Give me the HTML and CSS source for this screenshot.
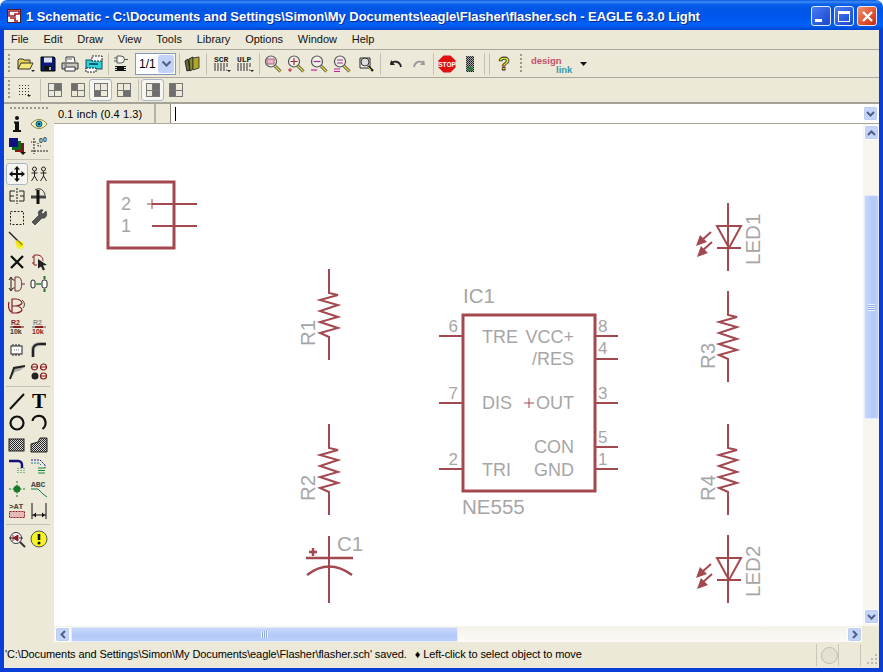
FILE: index.html
```html
<!DOCTYPE html>
<html lang="en">
<head>
    <meta charset="UTF-8">
    <title>1 Schematic - EAGLE 6.3.0 Light</title>
    <link rel="stylesheet" href="styles.css">
</head>
<body>
<div class="window">
    <header class="titlebar">
        <svg class="app_icon" width="14" height="14" viewBox="0 0 14 14"><rect x=".5" y=".5" width="13" height="13" fill="#fff" stroke="#5a1a20"/><path d="M2 2h10v3H8v2H2zM3 9h5v3h3" fill="none" stroke="#a01c28" stroke-width="1.6"/></svg>
        <div class="title_text">1 Schematic - C:\Documents and Settings\Simon\My Documents\eagle\Flasher\flasher.sch - EAGLE 6.3.0 Light</div>
        <div class="cap_btn"><span class="cap_min"></span></div>
        <div class="cap_btn"><span class="cap_max"></span></div>
        <div class="cap_btn cap_close"><svg width="13" height="13" viewBox="0 0 13 13"><path d="M2 2l9 9M11 2l-9 9" stroke="#fff" stroke-width="2.4"/></svg></div>
    </header>

    <div class="frame">
        <nav class="menubar">
            <span>File</span><span>Edit</span><span>Draw</span><span>View</span><span>Tools</span><span>Library</span><span>Options</span><span>Window</span><span>Help</span>
        </nav>

        <div class="toolbar tb_main">
            <div class="grip"></div>
            <div class="tool"><svg width="18" height="18" viewBox="0 0 18 18"><path d="M1 14V5l1-1h4l1 1h6v3" fill="#e8d050" stroke="#333"/><path d="M1 14l3-6h12l-3 6z" fill="#f4e878" stroke="#333"/><path d="M14 15h4l-2 2z" fill="#222"/></svg></div>
            <div class="tool"><svg width="18" height="18" viewBox="0 0 18 18"><path d="M2 2h13l1 1v13H2z" fill="#0a1a78" stroke="#000"/><rect x="5" y="2.5" width="8" height="5" fill="#dfe4f4"/><rect x="5" y="11" width="8" height="5" fill="#111"/><rect x="10" y="12" width="2" height="3" fill="#aaa"/></svg></div>
            <div class="tool"><svg width="18" height="18" viewBox="0 0 18 18"><path d="M5 7V2h8l1 5" fill="#fff" stroke="#333"/><path d="M1 8h16v6H1z" fill="#c8c8c0" stroke="#333"/><path d="M4 12h10v4H4z" fill="#fff" stroke="#333"/><path d="M6 4h5M3 10h3" stroke="#666"/></svg></div>
            <div class="tool tool_gap"><svg width="18" height="18" viewBox="0 0 18 18"><rect x="1" y="5" width="16" height="9" fill="#2fd0d8" stroke="#16505a"/><rect x="7" y="1" width="10" height="5" fill="#fff" stroke="#222" stroke-dasharray="2 1"/><rect x="1" y="13" width="10" height="4" fill="#fff" stroke="#222" stroke-dasharray="2 1"/><path d="M4 9h9" stroke="#0a5d70" stroke-width="2"/></svg></div>
            <div class="sep"></div>
            <div class="tool"><svg width="18" height="18" viewBox="0 0 18 18"><path d="M5 1h4a3.500 3.500 0 0 1 0 7H5zM2 3h3M2 6h3M12 4.500h4" fill="#f4f4ec" stroke="#555"/><rect x="5" y="11" width="7" height="5" fill="#111"/><path d="M3 11.500h2M3 13.500h2M3 15.500h2M12 11.500h2M12 13.500h2M12 15.500h2" stroke="#111"/></svg></div>
            <div class="combo"><span>1/1</span><b class="combo_arrow"><svg width="11" height="8" viewBox="0 0 11 8"><path d="M1.500 1.500l4 4 4-4" fill="none" stroke="#4d6185" stroke-width="2"/></svg></b></div>
            <div class="sep"></div>
            <div class="tool"><svg width="18" height="18" viewBox="0 0 18 18"><path d="M2 6l3-2 2 11-3 1z" fill="#6b6b3a" stroke="#222"/><path d="M6 4l4-2v12l-3 2z" fill="#8c8a30" stroke="#222"/><path d="M10 3l6-1v11l-6 2z" fill="#b0a820" stroke="#444"/></svg></div>
            <div class="sep"></div>
            <div class="tool tool_wide tool_gap"><svg width="20" height="18" viewBox="0 0 20 18"><text class="ico_mono" x="2" y="7">SCR</text><path d="M2 9h14M2 11h14M2 13h12M2 15h13" stroke="#333" stroke-dasharray="2 1"/><path d="M15 15h4l-2 2z" fill="#222"/></svg></div>
            <div class="tool tool_wide"><svg width="20" height="18" viewBox="0 0 20 18"><text class="ico_mono" x="2" y="7">ULP</text><path d="M2 9h14M2 11h14M2 13h12M2 15h13" stroke="#333" stroke-dasharray="2 1"/><path d="M15 15h4l-2 2z" fill="#222"/></svg></div>
            <div class="sep"></div>
            <div class="tool tool_wide"><svg width="18" height="18" viewBox="0 0 18 18"><use href="#lens"/><rect x="3" y="4" width="7" height="5" fill="#e8b8c8" stroke="#b06080"/></svg></div>
            <div class="tool tool_wide"><svg width="18" height="18" viewBox="0 0 18 18"><use href="#lens"/><path d="M7 3v7M3.500 6.500h7" stroke="#a03040" stroke-width="1.200"/><path d="M1 15h4M3 13v4" stroke="#c02040"/></svg></div>
            <div class="tool tool_wide"><svg width="18" height="18" viewBox="0 0 18 18"><use href="#lens"/><path d="M3.500 6.500h7" stroke="#a03090" stroke-width="1.200"/><path d="M1 15h6" stroke="#c020a0" stroke-width="1.200"/></svg></div>
            <div class="tool tool_wide"><svg width="18" height="18" viewBox="0 0 18 18"><use href="#lens"/><path d="M4 5h6M4 8h6" stroke="#a03090" stroke-width="1.200"/><path d="M1 14h6M1 16.500h6" stroke="#c020a0"/></svg></div>
            <div class="tool tool_gap"><svg width="18" height="18" viewBox="0 0 18 18"><path d="M3 3l10 0v10H3z" fill="#fff" stroke="#222"/><circle cx="8" cy="7" r="4" fill="#ddd" stroke="#333"/><path d="M11 11l5 5" stroke="#222" stroke-width="2.400"/><path d="M11 12l3 3" stroke="#e8d030" stroke-width="1"/></svg></div>
            <div class="sep"></div>
            <div class="tool tool_wide tool_gap"><svg width="18" height="18" viewBox="0 0 18 18"><path d="M4 5l-1 5h5" fill="#222"/><path d="M4 9c2-4 9-3 10 3" fill="none" stroke="#222" stroke-width="1.800"/></svg></div>
            <div class="tool tool_wide"><svg width="18" height="18" viewBox="0 0 18 18"><path d="M14 5l1 5h-5" fill="#999"/><path d="M14 9c-2-4-9-3-10 3" fill="none" stroke="#999" stroke-width="1.800"/></svg></div>
            <div class="sep"></div>
            <div class="tool tool_wide"><svg width="18" height="18" viewBox="0 0 18 18"><path d="M5.500 .5h7l5 5v7l-5 5h-7l-5-5v-7z" fill="#e01010"/><text class="ico_stop" x="9" y="11.500">STOP</text></svg></div>
            <div class="tool tool_wide"><svg width="18" height="18" viewBox="0 0 18 18"><rect x="5" y="1" width="8" height="16" fill="url(#dots)"/><circle cx="9" cy="14" r="2.500" fill="#2c7a3a"/></svg></div>
            <div class="sep sep_double"></div>
            <div class="sep"></div>
            <div class="tool tool_gap"><svg width="18" height="20" viewBox="0 0 18 20"><text class="ico_help" x="9" y="16">?</text></svg></div>
            <div class="grip grip_link"></div>
            <div class="design_link"><span class="dl_a">design</span><span class="dl_b">link</span></div>
            <svg class="dl_arrow" width="7" height="4" viewBox="0 0 7 4"><path d="M0 0h7L3.500 4z" fill="#111"/></svg>
        </div>

        <div class="toolbar tb_view">
            <div class="grip"></div>
            <div class="tool tool_grid"><svg width="16" height="16" viewBox="0 0 16 16"><rect x="1" y="1" width="14" height="14" fill="url(#griddots)"/><path d="M11 13h4l-2 2z" fill="#222"/></svg></div>
            <div class="sep"></div>
            <div class="tool"><span class="quad"><i></i><i class="on"></i><i></i><i></i></span></div>
            <div class="tool"><span class="quad"><i class="on"></i><i></i><i></i><i></i></span></div>
            <div class="tool pressed"><span class="quad"><i></i><i></i><i class="on"></i><i></i></span></div>
            <div class="tool"><span class="quad"><i></i><i></i><i></i><i class="on"></i></span></div>
            <div class="sep"></div>
            <div class="tool pressed"><span class="quad"><i></i><i class="on"></i><i></i><i class="on"></i></span></div>
            <div class="tool"><span class="quad"><i class="on"></i><i></i><i class="on"></i><i></i></span></div>
        </div>

        <div class="workspace">
            <aside class="toolbox">
                <div class="grip_h"></div>
                <div class="box_grid">
                    <div class="cell"><svg width="18" height="18" viewBox="0 0 18 18"><circle cx="9" cy="3" r="2" fill="#111"/><path d="M6 6.500h5V15h2v2H5v-2h2V8.500H6z" fill="#111"/></svg></div>
                    <div class="cell"><svg width="18" height="18" viewBox="0 0 18 18"><path d="M1 9c4-6 12-6 16 0-4 6-12 6-16 0z" fill="#f6f2c0" stroke="#8a8a40"/><circle cx="9" cy="9" r="3" fill="#22a8c8" stroke="#185868"/><circle cx="9" cy="9" r="1" fill="#111"/></svg></div>
                    <div class="cell"><svg width="18" height="18" viewBox="0 0 18 18"><rect x="7" y="6" width="9" height="9" fill="#8a1414"/><rect x="4" y="4" width="9" height="9" fill="#0c6a1e"/><rect x="1" y="1" width="9" height="9" fill="#101080"/><path d="M12 15h6l-3 3z" fill="#111"/></svg></div>
                    <div class="cell"><svg width="18" height="18" viewBox="0 0 18 18"><path d="M4 1v16M1 14h17" stroke="#222" stroke-dasharray="2 1"/><path d="M8 9v-3M8 9h4M1 5h5" stroke="#222" stroke-dasharray="1 1"/><text class="ico_tiny" x="9" y="6">0</text><text class="ico_tiny" x="13" y="5">0</text></svg></div>
                    <div class="box_sep"></div>
                    <div class="cell pressed"><svg width="18" height="18" viewBox="0 0 18 18"><path d="M9 1l3 3.500h-2V8h3.500V6L17 9l-3.500 3v-2H10v3.500h2L9 17l-3-3.500h2V10H4.500v2L1 9l3.500-3v2H8V4.500H6z" fill="#111"/></svg></div>
                    <div class="cell"><svg width="18" height="18" viewBox="0 0 18 18"><g id="man" fill="none" stroke="#222"><circle cx="4.500" cy="4" r="2"/><path d="M4.500 6v5M1.500 8h6M4.500 11l-3 5M4.500 11l3 5"/></g><use href="#man" x="9"/></svg></div>
                    <div class="cell"><svg width="18" height="18" viewBox="0 0 18 18"><path d="M9 1v16" stroke="#111" stroke-dasharray="2 1"/><path d="M7 4H2v10h5M2 9h4M11 4h5v10h-5M16 9h-4" fill="none" stroke="#222"/></svg></div>
                    <div class="cell"><svg width="18" height="18" viewBox="0 0 18 18"><path d="M1 10h15" stroke="#444" stroke-width="3"/><path d="M8 3v14" stroke="#111" stroke-width="3"/><path d="M5 3c5-3 9 0 10 5" fill="none" stroke="#333"/></svg></div>
                    <div class="cell"><svg width="18" height="18" viewBox="0 0 18 18"><rect x="2.500" y="2.500" width="13" height="13" fill="none" stroke="#222" stroke-dasharray="2 1.500"/></svg></div>
                    <div class="cell"><svg width="18" height="18" viewBox="0 0 18 18"><path d="M16 2l-3 3-2-1 2-3c-3-1-6 2-4 5L2 13l3 3 7-7c3 1 6-2 4-7z" fill="#555" stroke="#222" stroke-width=".6"/></svg></div>
                    <div class="cell"><svg width="18" height="18" viewBox="0 0 18 18"><circle cx="12" cy="14" r="4" fill="#f4f040"/><path d="M1 1l13 13" stroke="#222" stroke-width="1.400"/><path d="M8 10l5 5" stroke="#f0e000" stroke-width="3"/></svg></div>
                    <div class="cell"></div>
                    <div class="cell"><svg width="18" height="18" viewBox="0 0 18 18"><path d="M3 3l12 12M15 3L3 15" stroke="#111" stroke-width="2.300"/></svg></div>
                    <div class="cell"><svg width="18" height="18" viewBox="0 0 18 18"><path d="M4 2h3c5 0 6 4 6 6M4 12h3M2 4h2M2 10h2M4 2v10" fill="none" stroke="#8a1c20"/><path d="M8 6l9 6-4 .5 2 4-2 1-2-4-3 2z" fill="#222"/></svg></div>
                    <div class="cell"><svg width="18" height="18" viewBox="0 0 18 18"><path d="M3 3v12M1 5l2-3 2 3M1 13l2 3 2-3" fill="none" stroke="#222"/><path d="M7 2h3c5 0 5 14 0 14H7zM7 5H5M7 13H5M14 9h3" fill="none" stroke="#7a3030"/></svg></div>
                    <div class="cell"><svg width="18" height="18" viewBox="0 0 18 18"><rect x="1" y="5" width="4" height="8" rx="2" fill="#fff" stroke="#222"/><rect x="12" y="5" width="5" height="8" rx="2" fill="#fff" stroke="#222"/><path d="M6 9h5" stroke="#1a7a2a" stroke-width="1.400"/><path d="M14.500 1v3M14.500 14v3" stroke="#1a7a2a" stroke-width="2"/></svg></div>
                    <div class="cell"><svg width="18" height="18" viewBox="0 0 18 18"><path d="M4 2h4c4 0 6 3 6 4s-3 3-6 3H4zM4 9h4c4 0 6 3 6 4s-3 3-6 3H4zM1 5c-1 4 0 8 2 10" fill="none" stroke="#8a1c20" stroke-width="1.200"/><path d="M14 3c3 2 3 6 1 8" fill="none" stroke="#444"/></svg></div>
                    <div class="cell"></div>
                    <div class="cell"><svg width="18" height="18" viewBox="0 0 18 18"><text class="ico_tiny ico_red" x="3" y="6">R2</text><path d="M2 8h14" stroke="#222"/><rect x="5" y="7" width="8" height="2" fill="#8a1c20"/><text class="ico_tiny" x="2" y="15">10k</text></svg></div>
                    <div class="cell"><svg width="18" height="18" viewBox="0 0 18 18"><text class="ico_tiny ico_grey" x="3" y="6">R2</text><path d="M2 8h14" stroke="#555"/><rect x="5" y="7" width="8" height="2" fill="#8a1c20"/><text class="ico_tiny ico_red" x="2" y="15">10k</text></svg></div>
                    <div class="cell"><svg width="18" height="18" viewBox="0 0 18 18"><rect x="3" y="5" width="11" height="8" fill="#fff" stroke="#222"/><path d="M5 3v2M8 3v2M11 3v2M5 13v2M8 13v2M11 13v2" stroke="#222"/><path d="M6 9h6" stroke="#777" stroke-dasharray="1 1"/></svg></div>
                    <div class="cell"><svg width="18" height="18" viewBox="0 0 18 18"><path d="M3 16V9c0-4 3-6 7-6h6" fill="none" stroke="#aaa" stroke-width="4"/><path d="M3 16V9c0-4 3-6 7-6h6" fill="none" stroke="#222" stroke-width="2"/></svg></div>
                    <div class="cell"><svg width="18" height="18" viewBox="0 0 18 18"><path d="M2 16l4-11 11-2-4 4-6 2z" fill="#aaa"/><path d="M2 16L6 5l11-2" fill="none" stroke="#222" stroke-width="2"/></svg></div>
                    <div class="cell"><svg width="18" height="18" viewBox="0 0 18 18"><g fill="none" stroke="#8a1c20" stroke-width="1.200"><circle cx="4.500" cy="4" r="3"/><circle cx="13.500" cy="4" r="3"/><circle cx="13.500" cy="13" r="3"/><path d="M1 4h7M10 4h7M10 13h7"/></g><circle cx="5" cy="13" r="3.500" fill="#222"/></svg></div>
                    <div class="box_sep box_sep_wide"></div>
                    <div class="cell"><svg width="18" height="18" viewBox="0 0 18 18"><path d="M2 17L16 2" stroke="#111" stroke-width="2"/></svg></div>
                    <div class="cell"><span class="tool_t">T</span></div>
                    <div class="cell"><svg width="18" height="18" viewBox="0 0 18 18"><circle cx="9" cy="9" r="6.500" fill="none" stroke="#111" stroke-width="2.200"/></svg></div>
                    <div class="cell"><svg width="18" height="18" viewBox="0 0 18 18"><path d="M2.500 7C3 1 14-1 15.500 8c.3 2-.5 5-3 7" fill="none" stroke="#111" stroke-width="2.200"/></svg></div>
                    <div class="cell"><svg width="18" height="18" viewBox="0 0 18 18"><rect x="1" y="3" width="15" height="12" fill="url(#hatch)" stroke="#222"/></svg></div>
                    <div class="cell"><svg width="18" height="18" viewBox="0 0 18 18"><path d="M1 16V8l7-2 2-4h7v14z" fill="url(#hatch)" stroke="#222"/></svg></div>
                    <div class="cell"><svg width="18" height="18" viewBox="0 0 18 18"><path d="M1 3h9c3 0 4 2 4 4v3" fill="none" stroke="#12127a" stroke-width="2.400"/><path d="M10 10v6M13 10v6M16 10v6" stroke="#1a8a3a" stroke-dasharray="1 1"/></svg></div>
                    <div class="cell"><svg width="18" height="18" viewBox="0 0 18 18"><path d="M1 2h9l5 5v3" fill="none" stroke="#1a1a8a" stroke-dasharray="2 1"/><path d="M1 5h8l2 2" fill="none" stroke="#1a7a9a" stroke-dasharray="2 1"/><path d="M8 10h7M8 12.500h7M8 15h7" stroke="#1a8a3a"/></svg></div>
                    <div class="cell"><svg width="18" height="18" viewBox="0 0 18 18"><circle cx="9" cy="9" r="3.500" fill="#1a7a2a"/><path d="M1 9h16M9 1v16" stroke="#1a7a2a" stroke-dasharray="2 1.500"/></svg></div>
                    <div class="cell"><svg width="18" height="18" viewBox="0 0 18 18"><text class="ico_mono ico_abc" x="1" y="7">ABC</text><path d="M1 9h7l5 5 4 3" fill="none" stroke="#1a7a4a"/></svg></div>
                    <div class="cell"><svg width="18" height="18" viewBox="0 0 18 18"><text class="ico_mono ico_abc" x="1" y="7">&gt;AT</text><rect x="1.500" y="9.500" width="15" height="6" fill="#e8b8b8" stroke="#8a1c20" stroke-dasharray="2 1"/></svg></div>
                    <div class="cell"><svg width="18" height="18" viewBox="0 0 18 18"><path d="M2 1v16M16 1v16M2 13h14" stroke="#111"/><path d="M3 13l3-2.500v5zM15 13l-3-2.500v5z" fill="#111"/></svg></div>
                    <div class="box_sep"></div>
                    <div class="cell"><svg width="18" height="18" viewBox="0 0 18 18"><circle cx="8" cy="8" r="5.500" fill="#fff" stroke="#333"/><path d="M1 8h4M11 8h4" stroke="#333"/><path d="M5 5v6M5 8l5-3v6z" fill="#8a1c20" stroke="#8a1c20"/><path d="M12 12l5 5" stroke="#333" stroke-width="2"/></svg></div>
                    <div class="cell"><svg width="18" height="18" viewBox="0 0 18 18"><circle cx="9" cy="9" r="8" fill="#f6f420" stroke="#555"/><path d="M9 4v6" stroke="#111" stroke-width="2.600"/><circle cx="9" cy="13" r="1.500" fill="#111"/></svg></div>
                </div>
            </aside>

            <div class="main_area">
                <div class="cmd_row">
                    <div class="grid_label">0.1 inch (0.4 1.3)</div>
                    <div class="cmd_spacer"></div>
                    <div class="cmd_input"><span class="caret"></span></div>
                    <div class="sb_btn cmd_btn"><svg width="9" height="6" viewBox="0 0 9 6"><path d="M1 1l3.500 3.500L8 1" fill="none" stroke="#4d6185" stroke-width="2"/></svg></div>
                </div>
                <div class="canvas_row">
                    <div class="canvas">
                        <svg class="sheet" width="809" height="502" viewBox="54 124 809 502">
                            <defs>
                                <g id="res"><polyline class="wire" points="0,0 0,24 9,26 -9,31 9,36 -9,42 9,48 -9,53 9,59 -9,64 0,68 0,91"/></g>
                                <g id="led">
                                    <path class="wire" d="M0 0V68M-11 45H13M-11 23H13L1 45z"/>
                                    <path class="wire thin" d="M-17 29L-27 38M-16 39L-26 48"/>
                                    <path class="arrow_head" d="M-32 43L-28 32L-21 39zM-31 54L-27 43L-20 50z"/>
                                </g>
                            </defs>

                            <rect class="frame_line" x="108" y="182" width="66" height="66"/>
                            <path class="wire" d="M152 204H197M152 226H197"/>
                            <path class="origin" d="M147 204H157M152 199V209"/>
                            <text class="lbl pin_lbl" x="121" y="210">2</text>
                            <text class="lbl pin_lbl" x="121" y="232">1</text>

                            <use href="#res" x="329" y="269"/>
                            <text class="lbl" transform="translate(315 346) rotate(-90)">R1</text>
                            <use href="#res" x="329" y="424"/>
                            <text class="lbl" transform="translate(315 501) rotate(-90)">R2</text>
                            <use href="#res" x="728" y="291"/>
                            <text class="lbl" transform="translate(715 369) rotate(-90)">R3</text>
                            <use href="#res" x="728" y="424"/>
                            <text class="lbl" transform="translate(715 501) rotate(-90)">R4</text>

                            <use href="#led" x="728" y="203"/>
                            <text class="lbl" transform="translate(760 265) rotate(-90)">LED1</text>
                            <use href="#led" x="728" y="535"/>
                            <text class="lbl" transform="translate(760 597) rotate(-90)">LED2</text>

                            <path class="wire" d="M329 536V603"/>
                            <path class="wire thick" d="M306 558H353"/>
                            <path class="wire thick" d="M307 575Q329 558 352 575"/>
                            <path class="wire thick" d="M309 552H317M313 548V556"/>
                            <text class="lbl" x="337" y="551">C1</text>

                            <rect class="frame_line" x="463" y="315" width="132" height="176"/>
                            <path class="wire" d="M439 336H462M439 403H462M439 469H462M596 336H618M596 359H618M596 403H618M596 447H618M596 469H618"/>
                            <path class="origin" d="M524 403H534M529 398V408"/>
                            <text class="lbl" x="463" y="303">IC1</text>
                            <text class="lbl" x="462" y="514">NE555</text>
                            <text class="pin_name" x="482" y="343">TRE</text>
                            <text class="pin_name" x="482" y="409">DIS</text>
                            <text class="pin_name" x="482" y="476">TRI</text>
                            <text class="pin_name end" x="574" y="343">VCC+</text>
                            <text class="pin_name end" x="574" y="365">/RES</text>
                            <text class="pin_name end" x="574" y="409">OUT</text>
                            <text class="pin_name end" x="574" y="453">CON</text>
                            <text class="pin_name end" x="574" y="476">GND</text>
                            <text class="pin_num end" x="458" y="332">6</text>
                            <text class="pin_num end" x="458" y="399">7</text>
                            <text class="pin_num end" x="458" y="465">2</text>
                            <text class="pin_num" x="598" y="332">8</text>
                            <text class="pin_num" x="598" y="354">4</text>
                            <text class="pin_num" x="598" y="399">3</text>
                            <text class="pin_num" x="598" y="443">5</text>
                            <text class="pin_num" x="598" y="465">1</text>
                        </svg>
                    </div>
                    <div class="vscroll">
                        <div class="sb_btn"><svg width="9" height="6" viewBox="0 0 9 6"><path d="M1 5l3.500-3.500L8 5" fill="none" stroke="#4d6185" stroke-width="2"/></svg></div>
                        <div class="v_before"></div>
                        <div class="thumb v_thumb"><span class="v_lines"></span></div>
                        <div class="v_after"></div>
                        <div class="sb_btn"><svg width="9" height="6" viewBox="0 0 9 6"><path d="M1 1l3.500 3.500L8 1" fill="none" stroke="#4d6185" stroke-width="2"/></svg></div>
                    </div>
                </div>
                <div class="hscroll">
                    <div class="sb_btn"><svg width="6" height="9" viewBox="0 0 6 9"><path d="M5 1L1.500 4.500 5 8" fill="none" stroke="#4d6185" stroke-width="2"/></svg></div>
                    <div class="thumb h_thumb"><span class="h_lines"></span></div>
                    <div class="h_after"></div>
                    <div class="sb_btn"><svg width="6" height="9" viewBox="0 0 6 9"><path d="M1 1l3.500 3.500L1 8" fill="none" stroke="#4d6185" stroke-width="2"/></svg></div>
                    <div class="sb_corner"></div>
                </div>
            </div>
        </div>

        <footer class="statusbar">
            <div class="status_text">'C:\Documents and Settings\Simon\My Documents\eagle\Flasher\flasher.sch' saved.<span class="status_hint">&#9830; Left-click to select object to move</span></div>
            <div class="status_panel"><span class="status_lamp"></span></div>
            <div class="status_panel status_empty"></div>
            <div class="status_grip"><svg width="14" height="14" viewBox="0 0 14 14"><path d="M10 2h2v2h-2zM6 6h2v2H6zM10 6h2v2h-2zM2 10h2v2H2zM6 10h2v2H6zM10 10h2v2h-2z" fill="#bdbbab"/></svg></div>
        </footer>
    </div>

    <!-- shared bits for the icons -->
    <svg class="shared" width="0" height="0">
        <defs>
            <g id="lens"><path d="M11 11l5.500 5.500" stroke="#444" stroke-width="3"/><path d="M11 11l5.500 5.500" stroke="#e8dc40" stroke-width="1.400"/><circle cx="7" cy="6.500" r="5.500" fill="#efefe8" stroke="#555" stroke-width="1.200"/></g>
            <pattern id="dots" width="2" height="2" patternUnits="userSpaceOnUse"><rect width="2" height="2" fill="#aaa"/><rect width="1" height="1" fill="#111"/><rect x="1" y="1" width="1" height="1" fill="#333"/></pattern>
            <pattern id="griddots" width="3" height="3" patternUnits="userSpaceOnUse"><rect width="1" height="1" fill="#333"/></pattern>
            <pattern id="hatch" width="2" height="2" patternUnits="userSpaceOnUse"><rect width="2" height="2" fill="#ddd"/><rect width="1" height="1" fill="#222"/><rect x="1" y="1" width="1" height="1" fill="#222"/></pattern>
        </defs>
    </svg>
</div>
</body>
</html>
```
FILE: styles.css
```css
* {
    padding: 0;
    margin: 0;
    box-sizing: border-box;
    font-family: "Liberation Sans", Arial, sans-serif;
}
body {
    background: #fff;
    overflow: hidden;
}
.window {
    width: 883px;
    height: 672px;
    display: flex;
    flex-direction: column;
    position: relative;
}
.shared {
    position: absolute;
}

/* title bar */
.titlebar {
    height: 30px;
    flex: none;
    display: flex;
    align-items: center;
    padding: 2px 6px 0 7px;
    border-radius: 7px 7px 0 0;
    background: linear-gradient(#0a5ae0 0, #3c8cf8 2px, #0a62ea 4px, #0055e6 9px, #0058ee 18px, #0062f8 25px, #0046d0 30px);
    color: #fff;
}
.app_icon {
    flex: none;
    margin-right: 5px;
}
.title_text {
    flex: 1;
    font-size: 13px;
    font-weight: 700;
    letter-spacing: -0.05px;
    white-space: nowrap;
    text-shadow: 1px 1px 0 #0a2a90;
}
.cap_btn {
    width: 20px;
    height: 20px;
    margin-left: 3px;
    border: 1px solid #e4ecff;
    border-radius: 3px;
    background: linear-gradient(135deg, #4a7cf0, #2a5ce0 60%, #1a48c8);
    position: relative;
    display: flex;
    align-items: center;
    justify-content: center;
}
.cap_min {
    width: 7px;
    height: 3px;
    background: #fff;
    margin: 8px 5px 0 0;
}
.cap_max {
    width: 12px;
    height: 11px;
    border: 1px solid #fff;
    border-top-width: 3px;
}
.cap_close {
    background: linear-gradient(135deg, #f09070, #e05030 60%, #c03010);
}

.frame {
    flex: 1;
    display: flex;
    flex-direction: column;
    min-height: 0;
    border: solid #0a3ed8;
    border-width: 0 4px 4px;
    background: #ece9d8;
}

/* menu */
.menubar {
    height: 20px;
    flex: none;
    display: flex;
    align-items: center;
    padding-left: 1px;
    font-size: 11px;
    border-bottom: 1px solid #aca899;
}
.menubar span {
    padding: 0 8.800px 2px 6px;
    font-size: 11px;
    color: #111;
}

/* toolbars */
.toolbar {
    flex: none;
    display: flex;
    align-items: center;
    border-bottom: 1px solid #aca899;
}
.tb_main {
    height: 28px;
    padding-left: 4px;
}
.tb_view {
    height: 26px;
    padding-left: 4px;
    border-bottom: 2px solid #a5a398;
}
.grip {
    width: 2px;
    height: 20px;
    margin-right: 5px;
    background: repeating-linear-gradient(#9a9888 0 2px, transparent 2px 4px);
}
.grip_link {
    margin: 0 5px 0 5px;
}
.tool {
    width: 22px;
    height: 22px;
    flex: none;
    display: flex;
    align-items: center;
    justify-content: center;
}
.tool_wide {
    width: 23px;
}
.tool_gap {
    margin-left: 2px;
}
.tool.pressed,
.cell.pressed {
    background: #f6f5ef;
    border: 1px solid #a9b7c9;
    border-radius: 3px;
}
.sep {
    width: 1px;
    height: 22px;
    flex: none;
    margin: 0 1px 0 3px;
    background: #c4c2b2;
}
.tb_view .grip {
    margin-right: 3px;
}
.tb_view .tool {
    width: 23px;
}
.tb_view .tool_grid {
    width: 22px;
    margin-right: 2px;
}
.tb_view .sep {
    margin: 0 2px 0 3px;
}
.combo {
    width: 41px;
    height: 22px;
    margin-left: 3px;
    flex: none;
    background: #fff;
    border: 1px solid #7f9db9;
    display: flex;
    align-items: center;
    font-size: 12px;
    padding-left: 3px;
    justify-content: space-between;
}
.combo_arrow {
    width: 16px;
    height: 18px;
    margin-right: 1px;
    background: #c3d3f8;
    border-radius: 2px;
    display: flex;
    align-items: center;
    justify-content: center;
}
.design_link {
    width: 44px;
    height: 24px;
    position: relative;
    flex: none;
}
.dl_a,
.dl_b {
    position: absolute;
    font-size: 9.500px;
    font-weight: 700;
    line-height: 9px;
}
.dl_a {
    left: 4px;
    top: 4px;
    color: #c8506a;
}
.dl_b {
    left: 29px;
    top: 13px;
    color: #3a98a8;
}
.dl_arrow {
    margin-left: 9px;
}
.quad {
    width: 14px;
    height: 14px;
    display: grid;
    grid-template-columns: 1fr 1fr;
    grid-template-rows: 1fr 1fr;
    border: 1px solid #777;
    background: #777;
    gap: 1px;
}
.quad i {
    background: #ece9d8;
}
.quad i.on {
    background: #6e6e6e;
}

/* small text in icons */
.ico_mono {
    font-family: "Liberation Mono", monospace;
    font-size: 8px;
    font-weight: 700;
    fill: #222;
}
.ico_abc {
    fill: #444;
    font-size: 8px;
}
.ico_stop {
    font-size: 6.500px;
    font-weight: 700;
    fill: #fff;
    text-anchor: middle;
}
.ico_help {
    font-size: 19px;
    font-weight: 700;
    fill: #f8f020;
    stroke: #222;
    stroke-width: 0.8px;
    text-anchor: middle;
}
.ico_tiny {
    font-size: 7px;
    font-weight: 700;
    fill: #333;
}
.ico_red {
    fill: #8a1c20;
}
.ico_grey {
    fill: #888;
}
.tool_t {
    font-family: "Liberation Serif", serif;
    font-size: 21px;
    font-weight: 700;
    line-height: 22px;
}

/* workspace */
.workspace {
    flex: 1;
    display: flex;
    min-height: 0;
}
.toolbox {
    width: 50px;
    flex: none;
    padding: 3px 0 0 2px;
}
.grip_h {
    height: 2px;
    width: 38px;
    margin: 0 0 4px 4px;
    background: repeating-linear-gradient(90deg, #9a9888 0 2px, transparent 2px 4px);
}
.box_grid {
    display: grid;
    grid-template-columns: 22px 22px;
    grid-auto-rows: auto;
}
.cell {
    height: 22px;
    display: flex;
    align-items: center;
    justify-content: center;
}
.box_sep {
    grid-column: 1 / 3;
    height: 4px;
    margin-top: 2px;
    border-top: 1px solid #c4c2b2;
}
.box_sep_wide {
    height: 4px;
    margin-top: 3px;
}
.main_area {
    flex: 1;
    display: flex;
    flex-direction: column;
    min-width: 0;
}
.cmd_row {
    height: 20px;
    flex: none;
    display: flex;
    align-items: center;
    background: #fff;
    border-bottom: 1px solid #aca899;
}
.grid_label {
    width: 102px;
    height: 19px;
    padding: 4px 0 0 4px;
    font-size: 11px;
    letter-spacing: 0.1px;
    background: #ece9d8;
    border-right: 2px solid #b5b3a4;
}
.cmd_spacer {
    width: 15px;
    height: 19px;
    background: #ece9d8;
    border-right: 1px solid #8a8878;
}
.cmd_input {
    flex: 1;
    height: 19px;
    display: flex;
    align-items: center;
    padding-left: 4px;
}
.caret {
    width: 1px;
    height: 14px;
    background: #000;
}
.sb_btn {
    width: 15px;
    height: 15px;
    flex: none;
    border: 1px solid #fff;
    outline: 1px solid #bccdf0;
    outline-offset: -2px;
    border-radius: 3px;
    background: #c5d5f9;
    display: flex;
    align-items: center;
    justify-content: center;
}
.cmd_btn {
    margin: 0 1px 0 0;
}
.canvas_row {
    flex: 1;
    display: flex;
    min-height: 0;
}
.canvas {
    flex: 1;
    background: #fff;
    min-width: 0;
}
.sheet {
    display: block;
}
.vscroll {
    width: 16px;
    flex: none;
    display: flex;
    flex-direction: column;
    align-items: center;
    background: #f6f5ee;
    padding-top: 1px;
    padding-bottom: 2px;
}
.v_before {
    height: 55px;
    flex: none;
}
.v_after {
    flex: 1;
}
.thumb {
    background: #b9cdfa;
    border: 1px solid #e4ebfb;
    border-radius: 2px;
    display: flex;
    align-items: center;
    justify-content: center;
}
.v_thumb {
    width: 15px;
    height: 224px;
    background: linear-gradient(90deg, #c8d8fc, #b4c9f9 60%, #bdd0fa);
}
.v_lines {
    width: 7px;
    height: 7px;
    background: repeating-linear-gradient(#eef3ff 0 1px, #8ea8dc 1px 2px);
}
.hscroll {
    height: 16px;
    flex: none;
    display: flex;
    align-items: center;
    background: linear-gradient(#f4f2e9, #fbfaf6);
    padding-left: 1px;
}
.h_thumb {
    width: 387px;
    height: 15px;
    margin-left: 1px;
    background: linear-gradient(#c8d8fc, #b4c9f9 60%, #bdd0fa);
}
.h_lines {
    width: 7px;
    height: 7px;
    background: repeating-linear-gradient(90deg, #eef3ff 0 1px, #8ea8dc 1px 2px);
}
.h_after {
    flex: 1;
}
.sb_corner {
    width: 17px;
    height: 16px;
    flex: none;
    background: #ece9d8;
}

/* schematic */
.wire {
    fill: none;
    stroke: #a3484f;
    stroke-width: 2;
}
.thin {
    stroke-width: 2;
}
.thick {
    stroke-width: 2.500;
}
.arrow_head {
    fill: #a3484f;
}
.frame_line {
    fill: none;
    stroke: #a3484f;
    stroke-width: 3;
}
.origin {
    fill: none;
    stroke: #a3484f;
    stroke-width: 1;
}
.lbl {
    font-size: 20.500px;
    fill: #a6a6a6;
}
.pin_lbl {
    font-size: 18px;
}
.pin_name {
    font-size: 18px;
    fill: #a6a6a6;
}
.pin_num {
    font-size: 17px;
    fill: #a6a6a6;
}
.end {
    text-anchor: end;
}

/* status */
.statusbar {
    height: 26px;
    flex: none;
    display: flex;
    align-items: center;
}
.status_text {
    flex: 1;
    font-size: 11px;
    letter-spacing: -0.1px;
    padding: 0 0 2px 1px;
    white-space: nowrap;
}
.status_hint {
    margin-left: 8px;
}
.status_panel {
    width: 22px;
    height: 22px;
    border-left: 1px solid #c8c6b6;
    display: flex;
    align-items: center;
    justify-content: center;
}
.status_lamp {
    width: 17px;
    height: 17px;
    margin-left: 3px;
    border-radius: 50%;
    background: #e4e1d0;
    border: 1px solid #bdbbab;
    flex: none;
}
.status_grip {
    width: 19px;
    height: 22px;
    border-left: 1px solid #c8c6b6;
    display: flex;
    justify-content: flex-end;
    align-items: flex-end;
}
```
